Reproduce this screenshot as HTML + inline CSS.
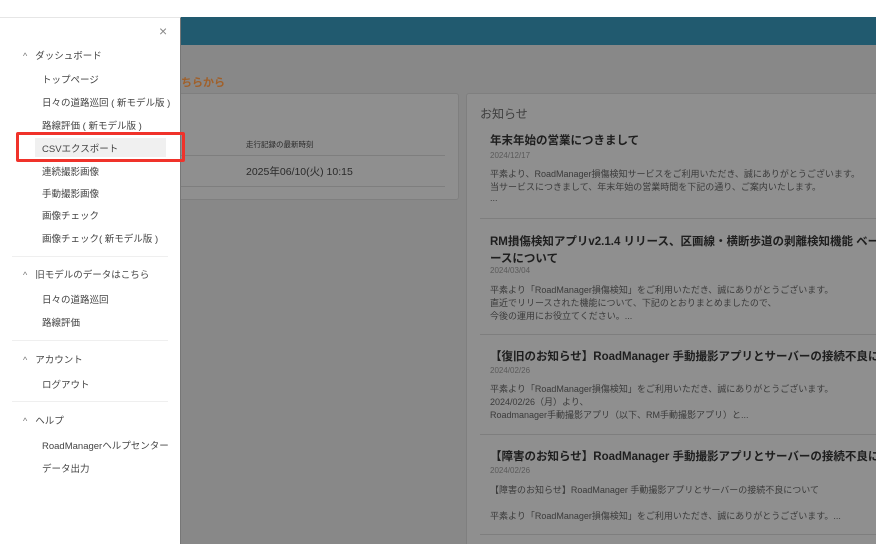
<!DOCTYPE html>
<html><head><meta charset="utf-8"><style>
*{margin:0;padding:0;box-sizing:border-box}
html,body{width:876px;height:544px;overflow:hidden}
body{position:relative;background:#fff;font-family:"Liberation Sans","Noto Sans CJK JP",sans-serif}
.a{position:absolute;white-space:nowrap}
#main{position:absolute;left:181px;top:17px;right:0;bottom:0;background:#888}
#hdr{position:absolute;left:181px;top:17px;right:0;height:28px;background:#215a6f}
.card{position:absolute;background:#8f8f8f;border:1px solid #7f7f7f;border-radius:3px}
#side{position:absolute;left:0;top:17px;width:181px;bottom:0;background:#fff;border-right:1px solid #777;border-top:1px solid #e6e6e6}
.s{font-size:9.5px;color:#444}
.sec{font-size:9.5px;color:#444}
.sep{position:absolute;left:12px;width:156px;height:1px;background:#efefef}
.t{font-size:11.5px;font-weight:bold;color:#1e1e1e}
.d{font-size:8px;color:#5a5a5a}
.b{font-size:9px;color:#3a3a3a}
.hl{position:absolute;height:1px;background:#7e7e7e}
#clip{position:absolute;left:466px;top:93px;width:410px;height:451px;overflow:hidden}
#clip .a,#clip .hl{margin-left:-466px;margin-top:-93px}
</style></head><body>
<div id="main"></div>
<div id="hdr"></div>
<div class="a" style="left:181px;top:74px;font-size:11px;font-weight:bold;color:#a0602a">ちらから</div>
<div class="card" style="left:176px;top:93px;width:283px;height:107px"></div>
<div class="a" style="left:246px;top:139px;font-size:7.5px;color:#2a2a2a">走行記録の最新時刻</div>
<div class="hl" style="left:181px;top:155px;width:264px"></div>
<div class="a" style="left:246px;top:164px;font-size:10.5px;color:#2a2a2a">2025年06/10(火) 10:15</div>
<div class="hl" style="left:181px;top:186px;width:264px"></div>
<div id="clip">
<div class="card" style="left:466px;top:93px;width:420px;height:470px;margin-left:-466px;margin-top:-93px"></div>
<div class="a" style="left:480px;top:105px;font-size:12px;color:#3e3e3e">お知らせ</div>

<div class="a t" style="left:490px;top:132px">年末年始の営業につきまして</div>
<div class="a d" style="left:490px;top:151px">2024/12/17</div>
<div class="a b" style="left:490px;top:167px">平素より、RoadManager損傷検知サービスをご利用いただき、誠にありがとうございます。</div>
<div class="a b" style="left:490px;top:180px">当サービスにつきまして、年末年始の営業時間を下記の通り、ご案内いたします。</div>
<div class="a b" style="left:490px;top:193px">...</div>
<div class="hl" style="left:480px;top:218px;width:396px"></div>

<div class="a t" style="left:490px;top:233px">RM損傷検知アプリv2.1.4 リリース、区画線・横断歩道の剥離検知機能 ベータ版リリ</div>
<div class="a t" style="left:490px;top:250px">ースについて</div>
<div class="a d" style="left:490px;top:266px">2024/03/04</div>
<div class="a b" style="left:490px;top:283px">平素より「RoadManager損傷検知」をご利用いただき、誠にありがとうございます。</div>
<div class="a b" style="left:490px;top:296px">直近でリリースされた機能について、下記のとおりまとめましたので、</div>
<div class="a b" style="left:490px;top:309px">今後の運用にお役立てください。...</div>
<div class="hl" style="left:480px;top:334px;width:396px"></div>

<div class="a t" style="left:490px;top:348px">【復旧のお知らせ】RoadManager 手動撮影アプリとサーバーの接続不良について</div>
<div class="a d" style="left:490px;top:366px">2024/02/26</div>
<div class="a b" style="left:490px;top:382px">平素より「RoadManager損傷検知」をご利用いただき、誠にありがとうございます。</div>
<div class="a b" style="left:490px;top:395px">2024/02/26（月）より、</div>
<div class="a b" style="left:490px;top:408px">Roadmanager手動撮影アプリ（以下、RM手動撮影アプリ）と...</div>
<div class="hl" style="left:480px;top:434px;width:396px"></div>

<div class="a t" style="left:490px;top:448px">【障害のお知らせ】RoadManager 手動撮影アプリとサーバーの接続不良について</div>
<div class="a d" style="left:490px;top:466px">2024/02/26</div>
<div class="a b" style="left:490px;top:483px">【障害のお知らせ】RoadManager 手動撮影アプリとサーバーの接続不良について</div>
<div class="a b" style="left:490px;top:509px">平素より「RoadManager損傷検知」をご利用いただき、誠にありがとうございます。...</div>
<div class="hl" style="left:480px;top:534px;width:396px"></div>
</div>

<div id="side"></div>
<div class="a" style="left:159px;top:23px;font-size:14px;color:#888">×</div>
<div style="position:absolute;left:35px;top:138px;width:131px;height:19px;background:#f0f0f0"></div>

<div class="a sec" style="left:23px;top:48px"><span style="font-size:9px;color:#777;margin-right:8px">^</span>ダッシュボード</div>
<div class="a s" style="left:42px;top:72px">トップページ</div>
<div class="a s" style="left:42px;top:95px">日々の道路巡回 ( 新モデル版 )</div>
<div class="a s" style="left:42px;top:118px">路線評価 ( 新モデル版 )</div>
<div class="a s" style="left:42px;top:141px">CSVエクスポート</div>
<div class="a s" style="left:42px;top:164px">連続撮影画像</div>
<div class="a s" style="left:42px;top:186px">手動撮影画像</div>
<div class="a s" style="left:42px;top:208px">画像チェック</div>
<div class="a s" style="left:42px;top:231px">画像チェック( 新モデル版 )</div>
<div class="sep" style="top:256px"></div>
<div class="a sec" style="left:23px;top:267px"><span style="font-size:9px;color:#777;margin-right:8px">^</span>旧モデルのデータはこちら</div>
<div class="a s" style="left:42px;top:292px">日々の道路巡回</div>
<div class="a s" style="left:42px;top:315px">路線評価</div>
<div class="sep" style="top:340px"></div>
<div class="a sec" style="left:23px;top:352px"><span style="font-size:9px;color:#777;margin-right:8px">^</span>アカウント</div>
<div class="a s" style="left:42px;top:377px">ログアウト</div>
<div class="sep" style="top:401px"></div>
<div class="a sec" style="left:23px;top:413px"><span style="font-size:9px;color:#777;margin-right:8px">^</span>ヘルプ</div>
<div class="a s" style="left:42px;top:438px">RoadManagerヘルプセンター</div>
<div class="a s" style="left:42px;top:461px">データ出力</div>

<div style="position:absolute;left:16px;top:132px;width:169px;height:30px;border:3px solid #f0322a;border-radius:2px"></div>
</body></html>
